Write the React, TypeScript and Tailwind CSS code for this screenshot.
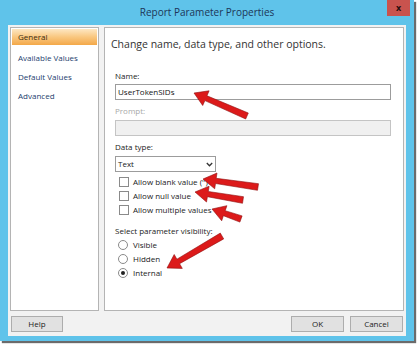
import React from 'react';

type Pt = [number, number];

// red call-out arrow: tip -> tail, head drawn at the tip
const arrowPoints = (tip: Pt, tail: Pt, shaft = 3.3, headLen = 13, headW = 8) => {
  const [x1, y1] = tip;
  const [x2, y2] = tail;
  const len = Math.hypot(x2 - x1, y2 - y1);
  const ux = (x2 - x1) / len;
  const uy = (y2 - y1) / len;
  const nx = -uy;
  const ny = ux;
  const bx = x1 + ux * headLen;
  const by = y1 + uy * headLen;
  const pts: Pt[] = [
    [x1, y1],
    [bx + nx * headW, by + ny * headW],
    [bx + nx * shaft * 0.8, by + ny * shaft * 0.8],
    [x2 + nx * shaft, y2 + ny * shaft],
    [x2 - nx * shaft, y2 - ny * shaft],
    [bx - nx * shaft * 0.8, by - ny * shaft * 0.8],
    [bx - nx * headW, by - ny * headW],
  ];
  return pts.map(p => `${p[0].toFixed(1)},${p[1].toFixed(1)}`).join(' ');
};

const arrows: { tip: Pt; tail: Pt }[] = [
  { tip: [194, 93], tail: [247, 116] },
  { tip: [203, 179], tail: [258, 187] },
  { tip: [195, 192], tail: [243, 200] },
  { tip: [212, 209], tail: [241, 219] },
  { tip: [167, 268], tail: [222, 236] },
];

const Checkbox: React.FC<{ label: string }> = ({ label }) => (
  <div className="flex items-center h-[14px]">
    <span className="w-[10px] h-[10px] ml-[4px] border border-[#8a8a8a] bg-white" />
    <span className="ml-[4px]">{label}</span>
  </div>
);

const Radio: React.FC<{ label: string; checked?: boolean }> = ({ label, checked }) => (
  <div className="flex items-center h-[14px]">
    <span className="w-[10px] h-[10px] ml-[3px] rounded-full border border-[#8a8a8a] bg-white flex items-center justify-center">
      {checked && <span className="w-[4px] h-[4px] rounded-full bg-[#222]" />}
    </span>
    <span className="ml-[5px]">{label}</span>
  </div>
);

const App: React.FC = () => {
  return (
    <div
      className="relative w-[419px] h-[346px] bg-white overflow-hidden text-[8px] text-[#222]"
      style={{ fontFamily: '"Open Sans", "Noto Sans", sans-serif' }}
    >
      <div className="w-[414px] h-[341px] bg-[#5fc3ea] flex flex-col shadow-[2px_2px_1px_#6b6b6b]">
        {/* title bar */}
        <div className="relative h-[25px] flex items-center justify-center text-[10px] text-[#1d3557]">
          Report Parameter Properties
          <div className="absolute right-[4px] top-0 w-[23px] h-[16px] bg-[#c9534e] flex items-center justify-center text-[9px] font-bold text-[#2a0e0e]">
            x
          </div>
        </div>

        <div className="flex-1 mx-[8px] mb-[5px] bg-[#f2f2f2] flex flex-col px-[2px] pt-[2px]">
          <div className="flex h-[284px] gap-[5px]">
            {/* nav */}
            <div className="w-[89px] bg-white border border-[#b4b4b4] p-[1px]">
              <div className="h-[16px] flex items-center pl-[6px] bg-gradient-to-b from-[#fde7c2] via-[#f9c77f] to-[#f3a847] text-[#3a2a10]">
                General
              </div>
              <div className="flex flex-col pl-[6px] text-[#24406e]">
                <div className="h-[18px] mt-[4px] flex items-center">Available Values</div>
                <div className="h-[19px] flex items-center">Default Values</div>
                <div className="h-[19px] flex items-center">Advanced</div>
              </div>
            </div>

            {/* page */}
            <div className="flex-1 bg-white border border-[#b4b4b4] pl-[6px] pr-[12px]">
              <div className="mt-[8px] h-[17px] text-[10.5px] text-[#333] flex items-center">
                Change name, data type, and other options.
              </div>
              <div className="pl-[4px]">
                <div className="mt-[17px] h-[12px] flex items-center">Name:</div>
                <div className="mt-[2px] h-[16px] border border-[#9c9c9c] flex items-center px-[2px] text-[#111]">
                  UserTokenSIDs
                </div>
                <div className="mt-[5px] h-[12px] flex items-center text-[#a8a8a8]">Prompt:</div>
                <div className="mt-[3px] h-[16px] border border-[#c4c4c4] bg-[#f0f0f0]" />
                <div className="mt-[5px] h-[12px] flex items-center">Data type:</div>
                <div className="mt-[3px] w-[101px] h-[16px] border border-[#9c9c9c] flex items-center justify-between px-[2px]">
                  <span>Text</span>
                  <svg width="7" height="5" viewBox="0 0 7 5">
                    <path d="M0.8 1 L3.5 3.8 L6.2 1" fill="none" stroke="#333" strokeWidth="1.3" />
                  </svg>
                </div>
                <div className="mt-[3px] flex flex-col">
                  <Checkbox label="Allow blank value ('')" />
                  <Checkbox label="Allow null value" />
                  <Checkbox label="Allow multiple values" />
                </div>
                <div className="mt-[8px] h-[12px] flex items-center">Select parameter visibility:</div>
                <div className="mt-[1px] flex flex-col">
                  <Radio label="Visible" />
                  <Radio label="Hidden" />
                  <Radio label="Internal" checked />
                </div>
              </div>
            </div>
          </div>

          {/* buttons */}
          <div className="flex items-center mt-[5px] pl-[1px] pr-[1px]">
            <button className="w-[52px] h-[16px] bg-[#e1e1e1] border border-[#adadad] text-[8px]">Help</button>
            <div className="flex-1" />
            <button className="w-[53px] h-[16px] bg-[#e1e1e1] border border-[#adadad] text-[8px]">OK</button>
            <button className="ml-[6px] w-[53px] h-[16px] bg-[#e1e1e1] border border-[#adadad] text-[8px]">Cancel</button>
          </div>
        </div>
      </div>

      {/* call-out arrows drawn over the dialog */}
      <svg className="absolute inset-0 pointer-events-none" width="419" height="346">
        {arrows.map((a, i) => (
          <polygon
            key={i}
            points={arrowPoints(a.tip, a.tail)}
            fill="#dc1a1a"
            stroke="#8e0f0f"
            strokeWidth="0.6"
            strokeLinejoin="round"
          />
        ))}
      </svg>
    </div>
  );
};

export default App;
